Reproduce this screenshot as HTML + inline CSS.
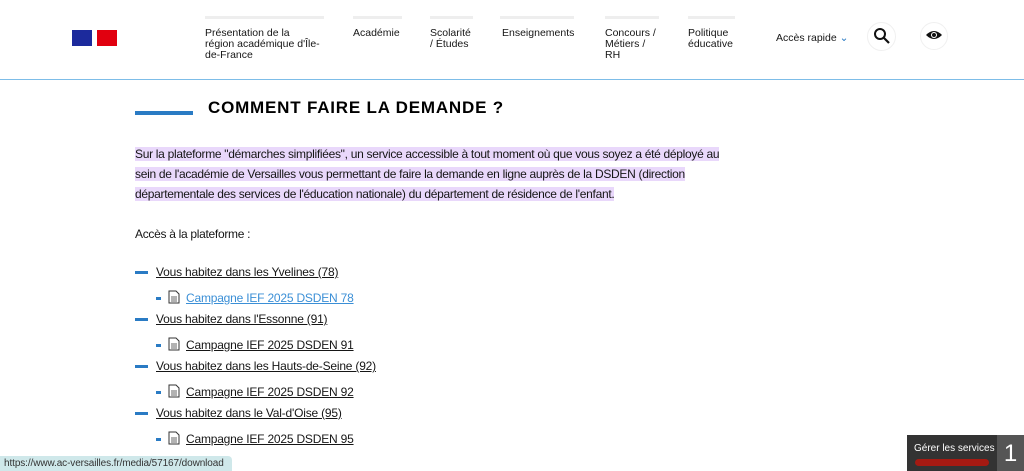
<!DOCTYPE html>
<html><head><meta charset="utf-8"><style>
*{margin:0;padding:0;box-sizing:border-box}
html,body{width:1024px;height:471px;overflow:hidden}
body{background:#fff;font-family:"Liberation Sans",sans-serif;color:#161616;position:relative}
.a{position:absolute}
.nav{font-size:10.5px;line-height:11px;color:#161616}
.nav .bar{position:absolute;top:-12px;left:0;height:3px;background:#eee}
.p{font-size:12px;line-height:20px;letter-spacing:-0.3px}
.hl{background:#e9d8fb}
.li{font-size:12px;text-decoration:underline;letter-spacing:-0.2px}
.dash{position:absolute;height:3px;background:#2a7bc4}
.sd{position:absolute;width:5px;height:3px;background:#2a7bc4}
</style></head><body>
<div class="a" style="left:72px;top:30px;width:20px;height:16px;background:#1c2a9c"></div>
<div class="a" style="left:97px;top:30px;width:20px;height:16px;background:#e1000f"></div>

<div class="a nav" style="left:205px;top:28px;width:118px"><div class="bar" style="width:119px"></div>Présentation de la<br>région académique d'Île-<br>de-France</div>
<div class="a nav" style="left:353px;top:28px"><div class="bar" style="width:49px"></div>Académie</div>
<div class="a nav" style="left:430px;top:28px"><div class="bar" style="width:43px"></div>Scolarité<br>/ Études</div>
<div class="a nav" style="left:502px;top:28px"><div class="bar" style="width:74px;left:-2px"></div>Enseignements</div>
<div class="a nav" style="left:605px;top:28px"><div class="bar" style="width:54px"></div>Concours /<br>Métiers /<br>RH</div>
<div class="a nav" style="left:688px;top:28px"><div class="bar" style="width:47px"></div>Politique<br>éducative</div>
<div class="a nav" style="left:776px;top:33px">Accès rapide <span style="color:#2a7bc4">&#8964;</span></div>
<div class="a" style="left:867px;top:22px;width:29px;height:29px;border-radius:50%;border:1px solid #f0f0f0"></div>
<svg class="a" style="left:873px;top:27px" width="18" height="18" viewBox="0 0 18 18"><circle cx="7" cy="7" r="5" fill="none" stroke="#111" stroke-width="2"/><path d="M11 11l5 5" stroke="#111" stroke-width="2.2"/></svg>
<div class="a" style="left:920px;top:22px;width:28px;height:28px;border-radius:50%;border:1px solid #f0f0f0"></div>
<svg class="a" style="left:925px;top:28px" width="18" height="14" viewBox="0 0 18 14"><path d="M1 7Q9-1 17 7Q9 15 1 7z" fill="#111"/><circle cx="9" cy="7" r="3" fill="#fff"/><circle cx="9" cy="7" r="2" fill="#111"/></svg>
<div class="a" style="left:0;top:79px;width:1024px;height:1px;background:#7dbde8"></div>

<div class="a" style="left:135px;top:111px;width:58px;height:4px;background:#2a7bc4"></div>
<div class="a" style="left:208px;top:98px;font-size:17px;font-weight:bold;letter-spacing:0.8px;color:#000">COMMENT FAIRE LA DEMANDE ?</div>

<div class="a p" style="left:135px;top:144px;width:600px"><span class="hl">Sur la plateforme "démarches simplifiées", un service accessible à tout moment où que vous soyez a été déployé au</span><br><span class="hl">sein de l'académie de Versailles vous permettant de faire la demande en ligne auprès de la DSDEN (direction</span><br><span class="hl">départementale des services de l'éducation nationale) du département de résidence de l'enfant.</span></div>
<div class="a p" style="left:135px;top:224px">Accès à la plateforme :</div>

<div class="dash" style="left:135px;top:271px;width:13px"></div><div class="a li" style="left:156px;top:265px">Vous habitez dans les Yvelines (78)</div>
<div class="sd" style="left:156px;top:297px"></div><svg class="a" style="left:168px;top:290px" width="12" height="14"><path d="M1 1h7l3 3v9H1z" fill="none" stroke="#333"/><path d="M3 7h6M3 9h6M3 11h6" stroke="#333" stroke-width=".8"/></svg><div class="a li" style="left:186px;top:291px;color:#3b8fd6">Campagne IEF 2025 DSDEN 78</div>
<div class="dash" style="left:135px;top:318px;width:13px"></div><div class="a li" style="left:156px;top:312px">Vous habitez dans l'Essonne (91)</div>
<div class="sd" style="left:156px;top:344px"></div><svg class="a" style="left:168px;top:337px" width="12" height="14"><path d="M1 1h7l3 3v9H1z" fill="none" stroke="#333"/><path d="M3 7h6M3 9h6M3 11h6" stroke="#333" stroke-width=".8"/></svg><div class="a li" style="left:186px;top:338px">Campagne IEF 2025 DSDEN 91</div>
<div class="dash" style="left:135px;top:365px;width:13px"></div><div class="a li" style="left:156px;top:359px">Vous habitez dans les Hauts-de-Seine (92)</div>
<div class="sd" style="left:156px;top:391px"></div><svg class="a" style="left:168px;top:384px" width="12" height="14"><path d="M1 1h7l3 3v9H1z" fill="none" stroke="#333"/><path d="M3 7h6M3 9h6M3 11h6" stroke="#333" stroke-width=".8"/></svg><div class="a li" style="left:186px;top:385px">Campagne IEF 2025 DSDEN 92</div>
<div class="dash" style="left:135px;top:412px;width:13px"></div><div class="a li" style="left:156px;top:406px">Vous habitez dans le Val-d'Oise (95)</div>
<div class="sd" style="left:156px;top:438px"></div><svg class="a" style="left:168px;top:431px" width="12" height="14"><path d="M1 1h7l3 3v9H1z" fill="none" stroke="#333"/><path d="M3 7h6M3 9h6M3 11h6" stroke="#333" stroke-width=".8"/></svg><div class="a li" style="left:186px;top:432px">Campagne IEF 2025 DSDEN 95</div>

<div class="a" style="left:0;top:456px;width:232px;height:15px;background:#cfe8ea;border-radius:0 4px 0 0;font-size:10px;line-height:16px;padding-left:4px;color:#333;white-space:nowrap;overflow:hidden;letter-spacing:-0.1px">https://www.ac-versailles.fr/media/57167/download</div>

<div class="a" style="left:907px;top:435px;width:90px;height:36px;background:#333"></div>
<div class="a" style="left:914px;top:443px;font-size:10px;color:#fff;white-space:nowrap">Gérer les services</div>
<div class="a" style="left:915px;top:459px;width:74px;height:7px;border-radius:4px;background:#a51a12"></div>
<div class="a" style="left:997px;top:435px;width:27px;height:36px;background:#555;color:#fff;font-size:24px;line-height:38px;text-align:center">1</div>
</body></html>
